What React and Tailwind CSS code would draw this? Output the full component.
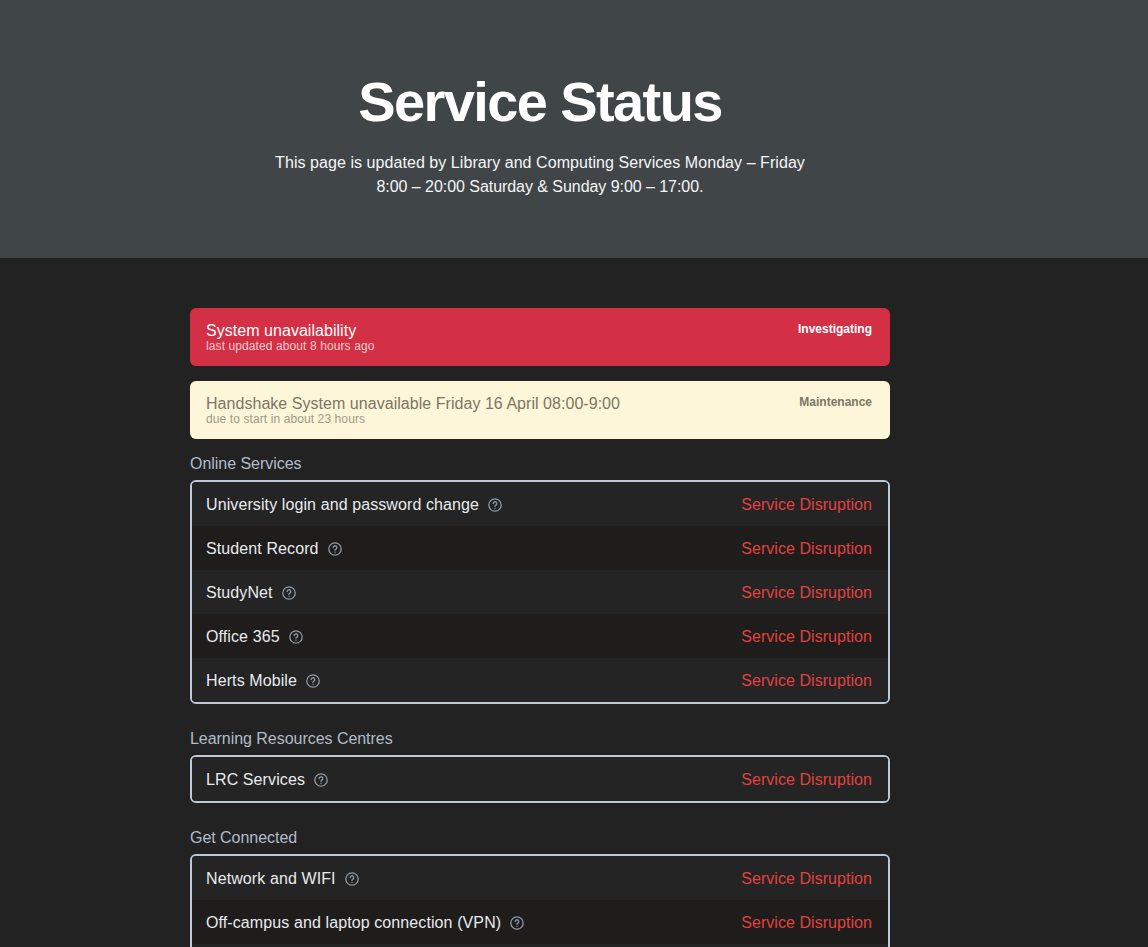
const sections = [
  {
    name: "Online Services",
    services: ["University login and password change", "Student Record", "StudyNet", "Office 365", "Herts Mobile"],
  },
  {
    name: "Learning Resources Centres",
    services: ["LRC Services"],
  },
  {
    name: "Get Connected",
    // last row only starts at the very bottom of the window, its text is out of view
    services: ["Network and WIFI", "Off-campus and laptop connection (VPN)", ""],
  },
];

function HelpIcon() {
  return (
    <svg viewBox="0 0 14 14" className="w-[14px] h-[14px] ml-[9px] shrink-0" fill="none" stroke="#8f99a3" strokeWidth="1.3">
      <circle cx="7" cy="7" r="6.2" />
      <path d="M5.2 5.6a1.8 1.8 0 1 1 2.7 1.5c-.6.35-.9.6-.9 1.2" strokeLinecap="round" />
      <circle cx="7" cy="10.3" r="0.7" fill="#8f99a3" stroke="none" />
    </svg>
  );
}

function Alert({ title, subtitle, status, className, subClassName }) {
  return (
    <div className={`h-[58px] rounded-md pl-4 pr-[18px] pt-[14px] flex justify-between ${className}`}>
      <div>
        <div className="text-base leading-[18px] tracking-[0.04px]">{title}</div>
        <div className={`text-xs leading-[12px] tracking-[0.1px] ${subClassName}`}>{subtitle}</div>
      </div>
      <div className="text-xs font-bold leading-[16px] -mt-px">{status}</div>
    </div>
  );
}

export default function App() {
  return (
    <div className="h-[947px] overflow-hidden bg-[#222222] font-['Liberation_Sans',Arial,sans-serif]">
      <header className="h-[258px] bg-[#404647] pr-[68px] flex flex-col items-center pt-[66px]">
        <h1 className="text-[56px] leading-[72px] font-bold text-white tracking-[-1.6px]">Service Status</h1>
        <p className="mt-[13px] w-[560px] text-center text-base leading-6 text-[#f4f6f8]">
          <span className="block tracking-[0.06px]">This page is updated by Library and Computing Services Monday – Friday</span>
          <span className="block tracking-[-0.05px]">8:00 – 20:00 Saturday &amp; Sunday 9:00 – 17:00.</span>
        </p>
      </header>

      <main className="w-[700px] ml-[190px] pt-[50px]">
        <div className="flex flex-col gap-[15px]">
          <Alert
            title="System unavailability"
            subtitle="last updated about 8 hours ago"
            status="Investigating"
            className="bg-[#d33045] text-white"
            subClassName="text-white/75"
          />
          <Alert
            title="Handshake System unavailable Friday 16 April 08:00-9:00"
            subtitle="due to start in about 23 hours"
            status="Maintenance"
            className="bg-[#fef6d8] text-[#7a7765]"
            subClassName="text-[#9d9a86]"
          />
        </div>

        {sections.map((section, i) => (
          <section key={section.name} className={i === 0 ? "mt-[15px]" : "mt-[25px]"}>
            <h2 className="text-base leading-[18px] pt-px mb-[7px] tracking-[-0.04px] text-[#b0bdc9]">{section.name}</h2>
            <div className="border-2 border-[#bccad8] rounded-md overflow-hidden">
              {section.services.map((service, j) => (
                <div
                  key={j}
                  className={`h-11 pt-px flex items-center justify-between pl-[14px] pr-4 text-base ${j % 2 === 1 ? "bg-[#1e1d1c]" : "bg-[#242424]"}`}
                >
                  {service && (
                    <>
                      <div className="flex items-center text-[#e8ebee] tracking-[0.1px]">
                        {service}
                        <HelpIcon />
                      </div>
                      <div className="text-[#e2413f] tracking-[0.05px]">Service Disruption</div>
                    </>
                  )}
                </div>
              ))}
            </div>
          </section>
        ))}
      </main>
    </div>
  );
}
